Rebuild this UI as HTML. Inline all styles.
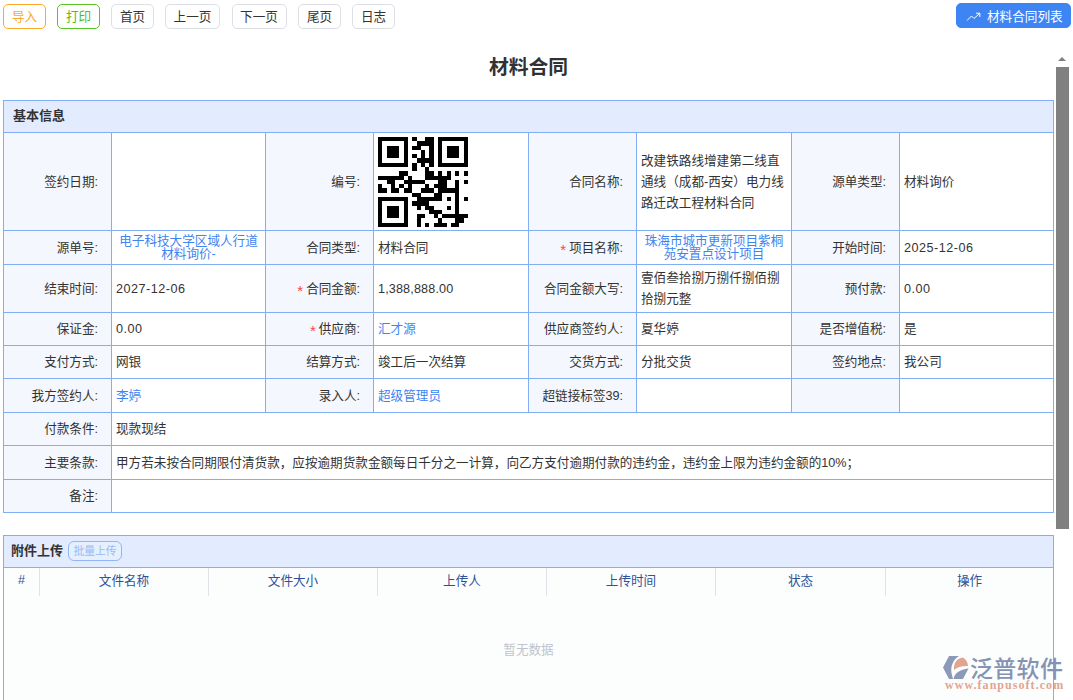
<!DOCTYPE html>
<html lang="zh-CN"><head><meta charset="utf-8"><title>材料合同</title>
<style>
html,body{margin:0;padding:0;}
body{width:1073px;height:700px;overflow:hidden;background:#fff;position:relative;font-family:"Liberation Sans","Noto Sans CJK SC",sans-serif;font-size:12.6px;color:#333;}
.btn{position:absolute;top:4px;height:23px;line-height:24px;border:1px solid #dcdfe6;border-radius:5px;background:#fff;color:#333;font-size:12.6px;text-align:center;box-sizing:content-box;}
.b-or{border-color:#fbab2b;color:#fba826;}
.b-gr{border-color:#58c427;color:#4fbd20;}
.b-blue{background:#3e84f3;border-color:#3e84f3;color:#fff;}
.title{position:absolute;left:0;width:1057px;top:52.5px;height:28px;line-height:28px;text-align:center;font-size:19.8px;font-weight:bold;color:#303133;}
.sec{position:absolute;left:3px;width:1049px;border:1px solid #82aef6;background:#e2ecfe;box-sizing:content-box;}
.sec .h{position:absolute;left:9px;top:0;height:31px;line-height:30px;font-weight:bold;color:#333;font-size:13px;}
table.f{position:absolute;left:3px;top:132px;border-collapse:collapse;table-layout:fixed;width:1050px;}
table.f td{border:1px solid #82aef6;padding:1px 4px 0 4px;font-size:12.6px;color:#333;overflow:hidden;line-height:17px;background:#fff;}
table.f td.l{background:#f4f7fd;text-align:right;padding:1px 13px 0 0;white-space:nowrap;}
a,.lk{color:#3e84f3;text-decoration:none;}
.req{color:#f44;margin-right:3px;position:relative;top:3px;font-size:15px;line-height:10px;}
.n{letter-spacing:0.5px;}
.ctr{text-align:center;line-height:12.6px !important;}
.sb-thumb{position:absolute;left:1056px;top:67px;width:13px;height:462px;background:#808080;}
.sb-up{position:absolute;left:1058px;top:57px;width:0;height:0;border-left:4px solid transparent;border-right:4px solid transparent;border-bottom:4px solid #808080;}
.att{position:absolute;left:3px;top:568px;width:1049px;height:140px;border:1px solid #82aef6;border-top:none;background:#fcfefe;}
.att .th{position:absolute;top:0;height:28px;line-height:26px;text-align:center;color:#2f5196;font-size:12.6px;border-left:1px solid #e0e3e8;box-sizing:border-box;}
.nodata{position:absolute;left:0;width:1049px;top:70.5px;text-align:center;color:#c0c4cc;font-size:12.6px;}
.upbtn{position:absolute;left:64px;top:5px;height:18px;line-height:18px;width:52px;border:1px solid #8fb6f7;border-radius:6px;color:#98bbf6;font-size:10.8px;text-align:center;background:#e6effe;}
.logo{position:absolute;left:943px;top:652px;width:125px;height:42px;}
</style></head><body>
<div class="btn b-or" style="left:3px;width:41px;">导入</div>
<div class="btn b-gr" style="left:57px;width:41px;">打印</div>
<div class="btn" style="left:111px;width:41px;">首页</div>
<div class="btn" style="left:165px;width:53px;">上一页</div>
<div class="btn" style="left:231.5px;width:53px;">下一页</div>
<div class="btn" style="left:298px;width:41px;">尾页</div>
<div class="btn" style="left:352px;width:41px;">日志</div>
<div class="btn b-blue" style="left:956px;width:113px;top:3px;"><svg width="15" height="10" viewBox="0 0 15 10" style="position:absolute;left:9px;top:8px;"><path d="M1 8.5 L5.5 4 L8 6.5 L13.5 1.5 M10 1.2 H13.8 V5" fill="none" stroke="#fff" stroke-width="1"/></svg><span style="position:absolute;left:30px;top:1px;">材料合同列表</span></div>
<div class="title">材料合同</div>
<div class="sb-up"></div><div class="sb-thumb"></div>

<div class="sec" style="top:100px;height:31px;"><div class="h">基本信息</div></div>
<table class="f">
<colgroup><col style="width:108px"><col style="width:154px"><col style="width:108px"><col style="width:155px"><col style="width:108px"><col style="width:155px"><col style="width:108px"><col style="width:154px"></colgroup>
<tr style="height:98px"><td class="l">签约日期:</td><td></td><td class="l">编号:</td><td style="padding:0;"><svg width="90" height="90" viewBox="0 0 21 21" shape-rendering="crispEdges" style="display:block;margin:1px 0 1px 4px;"><path fill="#000" d="M0 0h7v1h-7zM8 0h1v1h-1zM11 0h2v1h-2zM14 0h7v1h-7zM0 1h1v1h-1zM6 1h1v1h-1zM9 1h4v1h-4zM14 1h1v1h-1zM20 1h1v1h-1zM0 2h1v1h-1zM2 2h3v1h-3zM6 2h1v1h-1zM8 2h2v1h-2zM12 2h1v1h-1zM14 2h1v1h-1zM16 2h3v1h-3zM20 2h1v1h-1zM0 3h1v1h-1zM2 3h3v1h-3zM6 3h1v1h-1zM10 3h1v1h-1zM12 3h1v1h-1zM14 3h1v1h-1zM16 3h3v1h-3zM20 3h1v1h-1zM0 4h1v1h-1zM2 4h3v1h-3zM6 4h1v1h-1zM8 4h1v1h-1zM10 4h1v1h-1zM12 4h1v1h-1zM14 4h1v1h-1zM16 4h3v1h-3zM20 4h1v1h-1zM0 5h1v1h-1zM6 5h1v1h-1zM9 5h4v1h-4zM14 5h1v1h-1zM20 5h1v1h-1zM0 6h7v1h-7zM8 6h1v1h-1zM10 6h1v1h-1zM12 6h1v1h-1zM14 6h7v1h-7zM8 7h1v1h-1zM11 7h1v1h-1zM5 8h2v1h-2zM11 8h2v1h-2zM14 8h1v1h-1zM16 8h1v1h-1zM18 8h1v1h-1zM20 8h1v1h-1zM0 9h6v1h-6zM7 9h1v1h-1zM11 9h6v1h-6zM2 10h2v1h-2zM6 10h5v1h-5zM14 10h2v1h-2zM18 10h1v1h-1zM20 10h1v1h-1zM0 11h1v1h-1zM3 11h1v1h-1zM5 11h1v1h-1zM7 11h1v1h-1zM11 11h1v1h-1zM13 11h3v1h-3zM18 11h1v1h-1zM0 12h2v1h-2zM3 12h2v1h-2zM6 12h2v1h-2zM10 12h3v1h-3zM14 12h5v1h-5zM8 13h2v1h-2zM13 13h2v1h-2zM18 13h1v1h-1zM0 14h7v1h-7zM9 14h6v1h-6zM16 14h1v1h-1zM18 14h1v1h-1zM20 14h1v1h-1zM0 15h1v1h-1zM6 15h1v1h-1zM8 15h4v1h-4zM18 15h1v1h-1zM0 16h1v1h-1zM2 16h3v1h-3zM6 16h1v1h-1zM9 16h1v1h-1zM11 16h2v1h-2zM16 16h1v1h-1zM18 16h1v1h-1zM0 17h1v1h-1zM2 17h3v1h-3zM6 17h1v1h-1zM12 17h3v1h-3zM18 17h1v1h-1zM0 18h1v1h-1zM2 18h3v1h-3zM6 18h1v1h-1zM9 18h2v1h-2zM13 18h1v1h-1zM15 18h6v1h-6zM0 19h1v1h-1zM6 19h1v1h-1zM9 19h1v1h-1zM14 19h1v1h-1zM18 19h2v1h-2zM0 20h7v1h-7zM9 20h1v1h-1zM11 20h1v1h-1zM13 20h3v1h-3zM17 20h2v1h-2z"/></svg></td><td class="l">合同名称:</td><td style="line-height:21px;white-space:nowrap;">改建铁路线增建第二线直<br>通线（成都-西安）电力线<br>路迁改工程材料合同</td><td class="l">源单类型:</td><td>材料询价</td></tr>
<tr style="height:34px"><td class="l">源单号:</td><td class="ctr"><span class="lk">电子科技大学区域人行道<br>材料询价-</span></td><td class="l">合同类型:</td><td>材料合同</td><td class="l"><span class="req">*</span>项目名称:</td><td class="ctr"><span class="lk">珠海市城市更新项目紫桐<br>苑安置点设计项目</span></td><td class="l">开始时间:</td><td class="n">2025-12-06</td></tr>
<tr style="height:48px"><td class="l">结束时间:</td><td class="n">2027-12-06</td><td class="l"><span class="req">*</span>合同金额:</td><td class="n" style="letter-spacing:0.15px;">1,388,888.00</td><td class="l">合同金额大写:</td><td style="line-height:21px;">壹佰叁拾捌万捌仟捌佰捌拾捌元整</td><td class="l">预付款:</td><td class="n">0.00</td></tr>
<tr style="height:33px"><td class="l">保证金:</td><td class="n">0.00</td><td class="l"><span class="req">*</span>供应商:</td><td><span class="lk">汇才源</span></td><td class="l">供应商签约人:</td><td>夏华婷</td><td class="l">是否增值税:</td><td>是</td></tr>
<tr style="height:33px"><td class="l">支付方式:</td><td>网银</td><td class="l">结算方式:</td><td>竣工后一次结算</td><td class="l">交货方式:</td><td>分批交货</td><td class="l">签约地点:</td><td>我公司</td></tr>
<tr style="height:34px"><td class="l">我方签约人:</td><td><span class="lk">李婷</span></td><td class="l">录入人:</td><td><span class="lk">超级管理员</span></td><td class="l">超链接标签39:</td><td></td><td class="l"></td><td></td></tr>
<tr style="height:33px"><td class="l">付款条件:</td><td colspan="7">现款现结</td></tr>
<tr style="height:34px"><td class="l">主要条款:</td><td colspan="7">甲方若未按合同期限付清货款，应按逾期货款金额每日千分之一计算，向乙方支付逾期付款的违约金，违约金上限为违约金额的10%；</td></tr>
<tr style="height:33px"><td class="l">备注:</td><td colspan="7"></td></tr>
</table>

<div class="sec" style="top:535px;height:31px;"><div class="h" style="left:7px;">附件上传</div><div class="upbtn">批量上传</div></div>
<div class="att">
<div class="th" style="left:0;width:35px;border-left:none;line-height:24px;">#</div>
<div class="th" style="left:35px;width:169px;">文件名称</div>
<div class="th" style="left:204px;width:169px;">文件大小</div>
<div class="th" style="left:373px;width:169px;">上传人</div>
<div class="th" style="left:542px;width:169px;">上传时间</div>
<div class="th" style="left:711px;width:170px;">状态</div>
<div class="th" style="left:881px;width:168px;">操作</div>
<div class="nodata">暂无数据</div>
</div>
<div class="logo">
<svg width="26" height="23" viewBox="0 0 26 23" style="position:absolute;left:0;top:4px;"><path d="M0 11.5 L6 0 H16 C10 4 7.5 10 8.5 17 L10 23 H6 Z" fill="#8c9ab8"/><path d="M11 14 C10.5 7 14 2 20 1.5 C23.5 3.5 25 7 25 10 C20 9.5 14.5 11 11 14 Z" fill="#e3a48e"/><path d="M10.5 23 C11 18 17 13 25.5 12.5 L20 23 Z" fill="#8c9ab8"/></svg>
<span style="position:absolute;left:27px;top:1.5px;font-size:23px;line-height:30px;color:#8592b2;font-family:'Liberation Sans','Noto Sans CJK SC',sans-serif;font-weight:500;letter-spacing:0.3px;white-space:nowrap;">泛普软件</span>
<span style="position:absolute;left:2px;top:25.5px;font-size:12px;line-height:14px;color:#e3a48e;font-family:'Liberation Serif',serif;font-weight:bold;letter-spacing:1.05px;white-space:nowrap;">www.fanpusoft.com</span>
</div>
</body></html>
